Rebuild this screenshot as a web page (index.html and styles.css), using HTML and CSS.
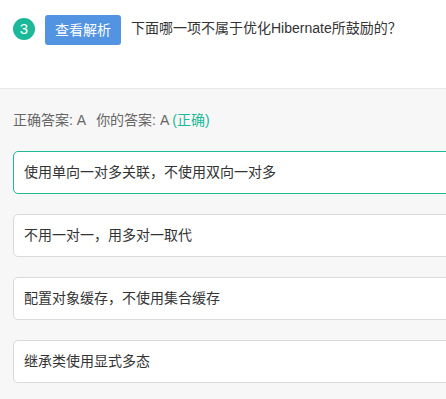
FILE: index.html
```html
<!DOCTYPE html>
<html lang="zh-CN">
<head>
<meta charset="utf-8">
<title>题目</title>
<link rel="stylesheet" href="styles.css">
</head>
<body>
<div class="header">
  <span class="num">3</span>
  <span class="btn">查看解析</span>
  <span class="question">下面哪一项不属于优化Hibernate所鼓励的？</span>
</div>
<div class="body">
  <div class="answer">正确答案: A<span class="mine">你的答案: A <span class="ok">(正确)</span></span></div>
  <div class="options">
    <div class="option option-right">使用单向一对多关联，不使用双向一对多</div>
    <div class="option">不用一对一，用多对一取代</div>
    <div class="option">配置对象缓存，不使用集合缓存</div>
    <div class="option">继承类使用显式多态</div>
  </div>
</div>
</body>
</html>
```

FILE: styles.css
```css
html, body {
  margin: 0;
  padding: 0;
  overflow: hidden;
}
body {
  background: #f7f7f7;
  font-family: "Liberation Sans", "Noto Sans CJK SC", sans-serif;
  font-size: 14px;
  color: #333;
}
.header {
  background: #fff;
  height: 89px;
  box-sizing: border-box;
  border-bottom: 1px solid #e8e8e8;
  padding: 15px 13px 0;
  display: flex;
  align-items: flex-start;
}
.num {
  width: 22px;
  height: 22px;
  margin-top: 3px;
  border-radius: 50%;
  background: #1bb999;
  color: #fff;
  font-size: 15px;
  line-height: 22px;
  text-align: center;
  flex: none;
}
.btn {
  margin-left: 10px;
  width: 76px;
  height: 30px;
  line-height: 30px;
  text-align: center;
  background: #5294e2;
  color: #fff;
  border-radius: 3px;
  flex: none;
}
.question {
  margin-left: 10px;
  line-height: 26px;
  white-space: nowrap;
}
.body {
  padding: 21px 0 0 13px;
  overflow: hidden;
}
.answer {
  color: #666;
  line-height: 20px;
}
.mine {
  margin-left: 10px;
}
.ok {
  color: #1bb999;
}
.options {
  margin-top: 21px;
  margin-right: -20px;
  display: flex;
  flex-direction: column;
  gap: 20px;
}
.option {
  background: #fff;
  border: 1px solid #dadada;
  border-radius: 5px;
  height: 41px;
  line-height: 41px;
  padding: 0 10px;
  color: #333;
}
.options .option-right {
  border-color: #1fb995;
}
```
